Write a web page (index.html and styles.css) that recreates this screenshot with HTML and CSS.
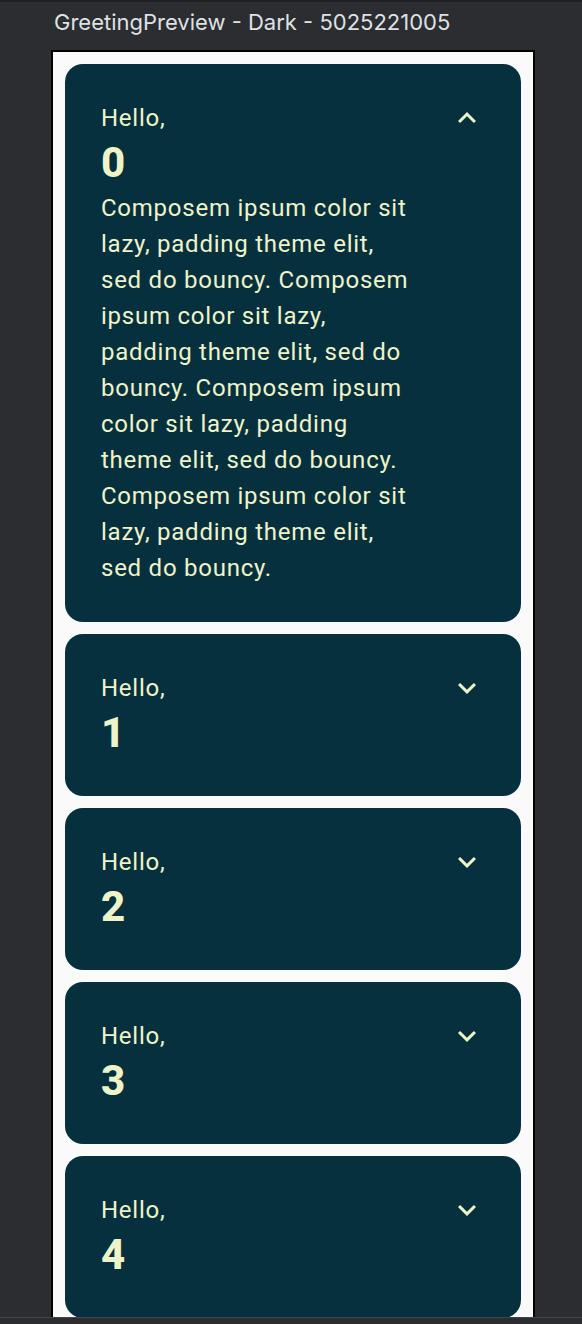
FILE: index.html
```html
<!DOCTYPE html>
<html>
<head>
<link rel="stylesheet" href="styles.css">
</head>
<body>

<div class="title">GreetingPreview - Dark - 5025221005</div>

<div class="frame">
 <div class="card">
    <div class="col">
        <div class="hello">Hello,</div>
        <div class="name">0</div>
        <div class="extra">Composem ipsum color sit lazy, padding theme elit, sed do bouncy. Composem ipsum color sit lazy, padding theme elit, sed do bouncy. Composem ipsum color sit lazy, padding theme elit, sed do bouncy. Composem ipsum color sit lazy, padding theme elit, sed do bouncy.</div>
    </div>
    <div class="icon-btn">
        <svg viewBox="0 0 24 24" width="36" height="36"><path d="M12 8l-6 6 1.41 1.41L12 10.83l4.59 4.58L18 14z"/></svg>
    </div>
 </div>

 <div class="card">
    <div class="col">
        <div class="hello">Hello,</div>
        <div class="name">1</div>
    </div>
    <div class="icon-btn">
        <svg viewBox="0 0 24 24" width="36" height="36"><path d="M16.59 8.59L12 13.17 7.41 8.59 6 10l6 6 6-6z"/></svg>
    </div>
 </div>

 <div class="card">
    <div class="col">
        <div class="hello">Hello,</div>
        <div class="name">2</div>
    </div>
    <div class="icon-btn">
        <svg viewBox="0 0 24 24" width="36" height="36"><path d="M16.59 8.59L12 13.17 7.41 8.59 6 10l6 6 6-6z"/></svg>
    </div>
 </div>

 <div class="card">
    <div class="col">
        <div class="hello">Hello,</div>
        <div class="name">3</div>
    </div>
    <div class="icon-btn">
        <svg viewBox="0 0 24 24" width="36" height="36"><path d="M16.59 8.59L12 13.17 7.41 8.59 6 10l6 6 6-6z"/></svg>
    </div>
 </div>

 <div class="card">
    <div class="col">
        <div class="hello">Hello,</div>
        <div class="name">4</div>
    </div>
    <div class="icon-btn">
        <svg viewBox="0 0 24 24" width="36" height="36"><path d="M16.59 8.59L12 13.17 7.41 8.59 6 10l6 6 6-6z"/></svg>
    </div>
 </div>
</div>

<div class="statusbar"></div>

</body>
</html>
```

FILE: styles.css
```css
html, body {
    height: 100%;
}

body {
    margin: 0;
    background-color: #2b2d30;
    border-top: 2px solid #1f2023;
    box-sizing: border-box;
    display: flex;
    flex-direction: column;
    overflow: hidden;
    font-family: Roboto, "Noto Sans", sans-serif;
}

.title {
    height: 48px;
    box-sizing: border-box;
    padding: 5px 0 0 54px;
    font-family: Inter, "Noto Sans", sans-serif;
    font-size: 22px;
    line-height: 30px;
    color: #dfe1e5;
    flex-shrink: 0;
}

.frame {
    flex: 1;
    min-height: 0;
    overflow: hidden;
    width: 484px;
    margin-left: 51px;
    border: 2px solid #000;
    border-bottom: none;
    background-color: #fafafa;
    padding: 12px 12px 0 12px;
    box-sizing: border-box;
    display: flex;
    flex-direction: column;
    gap: 12px;
}

.card {
    background-color: #07303f;
    border-radius: 18px;
    padding: 18px;
    display: flex;
    align-items: flex-start;
    flex-shrink: 0;
    color: #eef4c8;
}

.col {
    flex: 1;
    padding: 18px;
}

.hello {
    font-size: 24px;
    line-height: 36px;
    letter-spacing: 0.75px;
}

.name {
    font-size: 42px;
    line-height: 54px;
    font-weight: 800;
}

.extra {
    font-size: 24px;
    line-height: 36px;
    letter-spacing: 0.75px;
}

.icon-btn {
    width: 72px;
    height: 72px;
    display: flex;
    align-items: center;
    justify-content: center;
    flex-shrink: 0;
}

.icon-btn svg {
    fill: #eef4c8;
}

.statusbar {
    height: 6px;
    flex-shrink: 0;
    background-color: #2b2d30;
    border-top: 1px solid #43454a;
}
```
